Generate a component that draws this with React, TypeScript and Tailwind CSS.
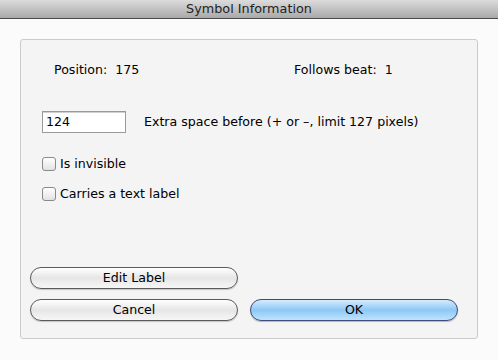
const font = { fontFamily: '"DejaVu Sans", "Liberation Sans", sans-serif' };

function Checkbox({ label }: { label: string }) {
  return (
    <label className="flex items-center gap-[4px] h-[14px]">
      <span className="w-[14px] h-[14px] rounded-[3px] border border-[#8a8a8a] bg-gradient-to-b from-white to-[#e2e2e2] shadow-[inset_0_1px_0_#fff]" />
      <span className="text-[12.6px] text-black leading-none">{label}</span>
    </label>
  );
}

function PillButton({ label, primary = false }: { label: string; primary?: boolean }) {
  return (
    <button
      className={
        primary
          ? 'w-[208px] h-[22px] rounded-full border border-[#3d4a7a] bg-gradient-to-b from-[#d4ecfd] via-[#8cc8f6] to-[#bfe3fc] text-[12.6px] text-black leading-none shadow-[0_1px_1px_rgba(0,0,0,0.25)]'
          : 'w-[208px] h-[22px] rounded-full border border-[#5b5b5b] bg-gradient-to-b from-white via-[#e6e6e6] to-[#f6f6f6] text-[12.6px] text-black leading-none shadow-[0_1px_1px_rgba(0,0,0,0.2)]'
      }
    >
      {label}
    </button>
  );
}

export default function App() {
  return (
    <div className="w-[498px] h-[360px] bg-[#fbfbfb] flex flex-col" style={font}>
      <div className="h-[19px] shrink-0 bg-gradient-to-b from-[#dcdcdc] to-[#a9a9a9] border-b border-[#4a4a4a] flex items-center justify-center">
        <span className="text-[12.8px] text-[#222] leading-none">Symbol Information</span>
      </div>

      <div className="mx-[20px] mt-[20px] h-[300px] rounded-[3px] border border-[#cbcbcb] bg-[#f4f4f4] flex flex-col">
        <div className="flex mt-[23px] h-[14px] items-center text-[12.6px] text-black leading-none">
          <span className="ml-[33px] w-[240px]">Position:&nbsp; 175</span>
          <span>Follows beat:&nbsp; 1</span>
        </div>

        <div className="flex items-center mt-[34px] ml-[21px]">
          <div className="w-[84px] h-[22px] border border-[#9a9a9a] bg-white flex items-center pl-[3px] text-[12.6px] text-black shadow-[inset_0_1px_0_#d0d0d0]">
            124
          </div>
          <span className="ml-[18px] text-[12.6px] text-black leading-none">
            Extra space before (+ or –, limit 127 pixels)
          </span>
        </div>

        <div className="flex flex-col gap-[16px] mt-[24px] ml-[21px]">
          <Checkbox label="Is invisible" />
          <Checkbox label="Carries a text label" />
        </div>

        <div className="flex flex-col gap-[10px] mt-auto mb-[17px] ml-[9px]">
          <PillButton label="Edit Label" />
          <div className="flex gap-[12px]">
            <PillButton label="Cancel" />
            <PillButton label="OK" primary />
          </div>
        </div>
      </div>
    </div>
  );
}
